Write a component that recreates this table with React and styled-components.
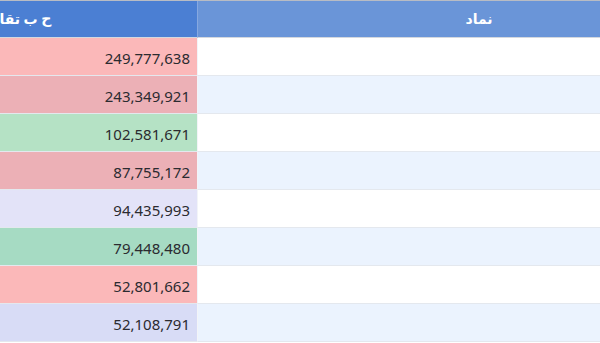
import React from "react";
import styled, { createGlobalStyle } from "styled-components";

const GlobalStyle = createGlobalStyle`
  html, body {
    margin: 0;
    padding: 0;
    background: #fff;
  }
  body {
    font-family: "Noto Sans", "DejaVu Sans", sans-serif;
    direction: rtl;
  }
`;

// the table is wider than the window and sits scrolled, so both columns run past the edges
const Viewport = styled.div`
  width: 600px;
  height: 343px;
  overflow: hidden;
  direction: rtl;
  border-top: 1px solid #b8bcc4;
  box-sizing: border-box;
`;

const Table = styled.div`
  display: grid;
  grid-template-columns: 563px 362px;
  width: 925px;
  margin-right: -160px;
`;

const HeadCell = styled.div`
  height: 37px;
  border-bottom: 1px solid #d4d8de;
  background: ${p => p.bg};
  border-left: ${p => (p.divider ? "1px solid #86a8e0" : "none")};
  color: #fff;
  font-weight: bold;
  font-size: 14px;
  display: flex;
  align-items: center;
  justify-content: center;
  box-sizing: border-box;
  padding-bottom: 1px;
`;

const SymbolCell = styled.div`
  height: 38px;
  box-sizing: border-box;
  border-bottom: 1px solid #e4e8ee;
  border-left: 1px solid #f2f4f8;
  background: ${p => (p.odd ? "#ebf3fe" : "#ffffff")};
`;

const ValueCell = styled.div`
  height: 38px;
  box-sizing: border-box;
  border-bottom: 1px solid #e4e8ee;
  background: ${p => p.bg};
  color: #2b2b30;
  font-size: 15px;
  display: flex;
  align-items: center;
  justify-content: flex-start;
  padding: 3px 7px 0 0;
`;

const Number = styled.span`
  direction: ltr;
`;

const rows = [
  { value: "249,777,638", bg: "#fbb8b9" },
  { value: "243,349,921", bg: "#ecb0b6" },
  { value: "102,581,671", bg: "#b5e2c5" },
  { value: "87,755,172", bg: "#ecb0b6" },
  { value: "94,435,993", bg: "#e3e3f8" },
  { value: "79,448,480", bg: "#a6dbc3" },
  { value: "52,801,662", bg: "#fbb8b9" },
  { value: "52,108,791", bg: "#d8dcf6" }
];

export default function App() {
  return (
    <>
      <GlobalStyle />
      <Viewport>
        <Table>
          <HeadCell bg="#6a95d8" divider>
            نماد
          </HeadCell>
          <HeadCell bg="#4b7fd3">ح ب تقاضا</HeadCell>
          {rows.map((row, i) => (
            <React.Fragment key={i}>
              <SymbolCell odd={i % 2 === 1} />
              <ValueCell bg={row.bg}>
                <Number>{row.value}</Number>
              </ValueCell>
            </React.Fragment>
          ))}
        </Table>
      </Viewport>
    </>
  );
}
